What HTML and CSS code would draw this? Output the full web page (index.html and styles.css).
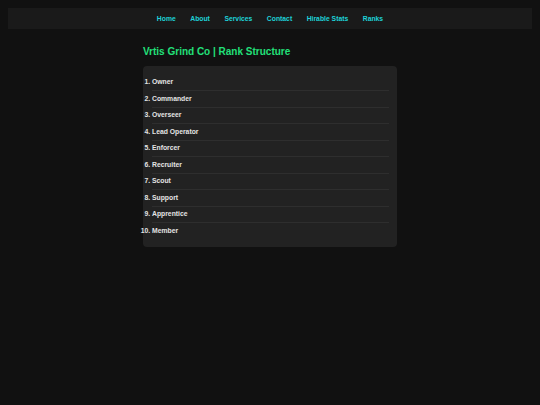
FILE: index.html
```html
<!DOCTYPE html>
<html lang="en">
<head>
<meta charset="utf-8">
<title>Vrtis Grind Co | Rank Structure</title>
<link rel="stylesheet" href="styles.css">
</head>
<body>
<nav class="topnav">
  <a href="#">Home</a>
  <a href="#">About</a>
  <a href="#">Services</a>
  <a href="#">Contact</a>
  <a href="#">Hirable Stats</a>
  <a href="#">Ranks</a>
</nav>
<main class="content">
  <h2 class="title">Vrtis Grind Co | Rank Structure</h2>
  <section class="panel">
    <ol class="ranks">
      <li>Owner</li>
      <li>Commander</li>
      <li>Overseer</li>
      <li>Lead Operator</li>
      <li>Enforcer</li>
      <li>Recruiter</li>
      <li>Scout</li>
      <li>Support</li>
      <li>Apprentice</li>
      <li>Member</li>
    </ol>
  </section>
</main>
</body>
</html>
```

FILE: styles.css
```css
html, body {
  background: #111111;
}
body {
  margin: 8px;
  font-family: "Liberation Sans", Arial, sans-serif;
  font-size: 6.8px;
  color: #e4e4e4;
}
.topnav {
  background: #1a1a1a;
  display: flex;
  justify-content: center;
  gap: 14.5px;
  padding: 6.5px 0;
  line-height: 8px;
}
.topnav a {
  color: #1ed2d8;
  text-decoration: none;
  font-weight: bold;
}
.content {
  width: 254px;
  margin: 0 auto;
  display: flex;
  flex-direction: column;
}
.title {
  margin: 17px 0 8px 0;
  font-size: 10px;
  line-height: 12px;
  font-weight: bold;
  color: #22e07a;
}
.panel {
  background: #222222;
  border-radius: 4px;
  padding: 8.5px 8.5px 8.5px 9px;
}
.ranks {
  margin: 0;
  padding: 0;
}
.ranks li {
  font-weight: bold;
  line-height: 8px;
  padding: 3.75px 0;
  border-bottom: 1px solid #2e2e2e;
}
.ranks li:last-child {
  border-bottom: none;
}
```
